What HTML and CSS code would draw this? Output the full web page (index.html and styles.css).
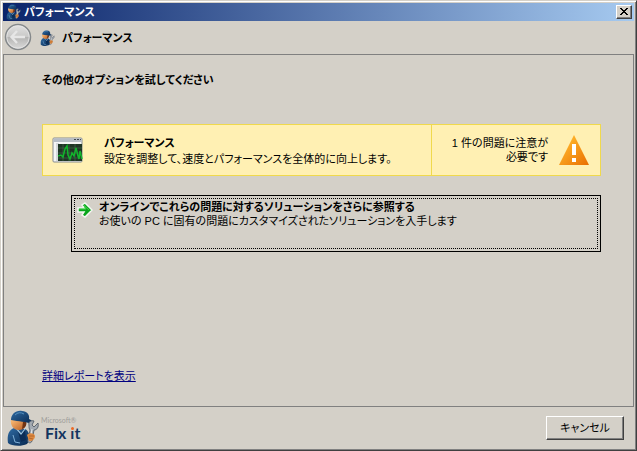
FILE: index.html
```html
<!DOCTYPE html>
<html lang="ja">
  <head>
    <meta charset="utf-8" />
    <title>パフォーマンス</title>
    <link rel="stylesheet" href="styles.css">
  </head>
  <body>
    <svg class="defs" aria-hidden="true">
      <defs>
        <linearGradient id="cap" x1="0" y1="0" x2="1" y2="1">
          <stop offset="0" stop-color="#2f6ba3" />
          <stop offset="1" stop-color="#06254c" />
        </linearGradient>
        <linearGradient id="face" x1="0" y1="0" x2="1" y2="1">
          <stop offset="0" stop-color="#ffc27c" />
          <stop offset="1" stop-color="#b85b20" />
        </linearGradient>
        <symbol id="mechanic" viewBox="0 0 32 36">
          <path d="M1 33C0 27 1 20 7 18L18 19C22 21 22 25 24 28L20 34C14 37 4 36 1 33Z" fill="url(#cap)" />
          <path d="M10 18L14 23L18 19L19 30L14 32Z" fill="#0b2c56" />
          <path d="M9 18L14 24L18 19" fill="none" stroke="#9cc5e2" stroke-width="1.2" />
          <path d="M6 25L8 32L13 33" fill="none" stroke="#7fb0d8" />
          <path d="M4 9C3 15 6 20 12 20C17 20 20 16 19 9Z" fill="url(#face)" />
          <path d="M15 19C19 18 20 14 19 11L16 12Z" fill="#713414" />
          <path d="M4 10C4 4 9 0 15 1C20 1 23 5 22 9C26 11 27 13 24 14C19 11 12 12 4 10Z" fill="url(#cap)" />
          <path d="M8 5Q12 1 17 4" fill="none" stroke="#5590c0" />
          <path d="M22 15C21 12 24 10 27 11L25 15L27 17L31 13C32 17 30 20 27 20L25 31C24 34 20 33 21 30L23 20C22 19 22 17 22 15Z" fill="#a3aab2" stroke="#555e69" stroke-width=".9" />
          <path d="M25 19L23 31" stroke="#e4e8eb" />
          <path d="M20 25C22 22 28 23 28 26C28 29 25 32 22 31Z" fill="#dc8a42" />
          <path d="M22 26L27 26M22 28L26 29" stroke="#a9571f" stroke-width=".7" />
        </symbol>
      </defs>
    </svg>
    <div class="window">
      <div class="titlebar">
        <svg class="title-icon" aria-hidden="true"><use href="#mechanic" /></svg>
        <span class="title">パフォーマンス</span>
        <button class="close" type="button" aria-label="閉じる">
          <svg width="10" height="8" viewBox="0 0 10 8" shape-rendering="crispEdges">
            <path d="M1 0h2v1h1v1h2V1h1V0h2v1H8v1H7v1H6v1h1v1h1v1h1v1H7V6H6V5H4v1H3v1H1V6h1V5h1V4h1V3H3V2H2V1H1z" />
          </svg>
        </button>
      </div>
      <header class="header">
        <button class="back" type="button" aria-label="戻る" disabled>
          <svg width="28" height="28" viewBox="0 0 28 28">
            <defs>
              <linearGradient id="disc" x1="0" y1="0" x2="0" y2="1">
                <stop offset="0" stop-color="#e2e2e2" />
                <stop offset=".48" stop-color="#c9c9c8" />
                <stop offset=".52" stop-color="#b4b4b3" />
                <stop offset="1" stop-color="#dddddc" />
              </linearGradient>
            </defs>
            <circle cx="14" cy="14" r="12.5" fill="url(#disc)" stroke="#85898b" stroke-width="1.5" />
            <circle cx="14" cy="14" r="11.2" fill="none" stroke="#e6e6e6" stroke-width=".8" />
            <path d="M13 8L7.5 14L13 20M8 14H21" fill="none" stroke="#e6e6e6" stroke-width="2.4" />
          </svg>
        </button>
        <svg class="header-icon" aria-hidden="true"><use href="#mechanic" /></svg>
        <span class="header-title">パフォーマンス</span>
      </header>
      <main class="content">
        <h1 class="heading">その他のオプションを試してください</h1>
        <section class="issue">
          <svg class="issue-icon" width="32" height="28" viewBox="0 0 32 28" aria-hidden="true">
            <rect x="1" y="2" width="29" height="24" rx="1" fill="#f5f6f6" stroke="#858b91" />
            <path d="M1.5 2.5H29.5V6H1.5Z" fill="#b6bdc5" />
            <path d="M22 3.5h2M25 3.5h2M28 3.5h1" stroke="#414950" />
            <rect x="4" y="7" width="3" height="18" fill="#d5d9dc" />
            <rect x="6" y="8" width="24" height="17" fill="#1f3525" />
            <path d="M6 12h24M6 17h24M6 22h24M11 8v17M17 8v17M23 8v17" stroke="#46704d" stroke-width=".6" />
            <path d="M6 20l3-1l2 2l2-8l2-3l1 9l2 4l2-6l2 3l2-8l2 8l1 3l1-8l2 8" fill="none" stroke="#12b52c" stroke-width="1.5" />
          </svg>
          <div class="issue-text">
            <h2 class="issue-title">パフォーマンス</h2>
            <p class="line">設定を調整して、速度とパフォーマンスを全体的に向上します。</p>
          </div>
          <div class="issue-status">
            <p class="line">1 件の問題に注意が<br>必要です</p>
            <svg width="32" height="32" viewBox="0 0 32 32" aria-hidden="true">
              <defs>
                <linearGradient id="warn" x1="0" y1="0" x2="1" y2="1">
                  <stop offset=".2" stop-color="#ffb52b" />
                  <stop offset="1" stop-color="#e96e00" />
                </linearGradient>
              </defs>
              <path d="M16 1L31 31H1Z" fill="url(#warn)" />
              <path d="M14 10h4v11h-4zM14 24h4v4h-4z" fill="#fff" />
            </svg>
          </div>
        </section>
        <button class="option" type="button">
          <svg width="16" height="16" viewBox="0 0 16 16" aria-hidden="true">
            <path d="M1 6H7L5 3L8 1L15 8L8 15L5 13L7 10H1Z" fill="#0aa51c" stroke="#f4f7f2" stroke-width="1.5" />
            <path d="M2 7H9L7 3.5L12 8" fill="none" stroke="#3fd046" />
          </svg>
          <span class="option-text">
            <strong>オンラインでこれらの問題に対するソリューションをさらに参照する</strong>
            <span>お使いの PC に固有の問題にカスタマイズされたソリューションを入手します</span>
          </span>
        </button>
        <a class="report" href="#report">詳細レポートを表示</a>
      </main>
      <footer class="footer">
        <div class="brand">
          <svg class="brand-icon" aria-hidden="true"><use href="#mechanic" /></svg>
          <div class="brand-text">
            <span class="brand-maker">Microsoft®</span>
            <span class="brand-name">Fix <span class="brand-i">ı</span>t</span>
          </div>
        </div>
        <button class="cancel" type="button">キャンセル</button>
      </footer>
    </div>
  </body>
</html>
```
FILE: styles.css
```css
* {
  box-sizing: border-box;
}
body {
  margin: 0;
  background-color: #d4d0c8;
  color: #000;
  font-family: "Liberation Sans", "Noto Sans CJK JP", sans-serif;
  font-size: 11px;
  line-height: 14px;
  font-feature-settings: "palt";
}
button {
  font: inherit;
  font-feature-settings: inherit;
  color: inherit;
  padding: 0;
  background-color: #d4d0c8;
}
svg {
  display: block;
  flex: none;
}
h1,
h2,
p {
  margin: 0;
  font-size: 11px;
}
.defs {
  position: absolute;
  width: 0;
  height: 0;
}
.window {
  display: flex;
  flex-direction: column;
  min-height: 100vh;
  padding: 1px;
  border: 1px solid;
  border-color: #d4d0c8 #404040 #404040 #d4d0c8;
  box-shadow: inset 1px 1px #fff, inset -1px -1px #808080;
}
.titlebar {
  display: flex;
  align-items: center;
  gap: 3px;
  height: 18px;
  margin: 1px 1px 0;
  padding: 0 2px 0 3px;
  background: linear-gradient(to right, #0a246a, #a6caf0);
  color: #fff;
  font-weight: bold;
}
.title-icon,
.header-icon {
  width: 15px;
  height: 16px;
}
.title {
  flex: 1;
}
.close {
  display: flex;
  align-items: center;
  justify-content: center;
  width: 16px;
  height: 14px;
}
.close,
.cancel {
  border: 1px solid;
  border-color: #fff #404040 #404040 #fff;
  box-shadow: inset -1px -1px #808080;
}
.header {
  display: flex;
  align-items: center;
  height: 33px;
  padding-left: 2px;
}
.back {
  margin-bottom: 2px;
  border: none;
  background: none;
}
.header-icon {
  margin: 0 7px 0 8px;
}
.header-title {
  font-weight: bold;
}
.content {
  display: flex;
  flex-direction: column;
  flex: 1;
  margin: 0 1px;
  padding: 18px 32px 23px 38px;
  border: 1px solid #808080;
}
.heading {
  margin-bottom: 37px;
}
.issue {
  display: flex;
  align-items: center;
  min-height: 52px;
  border: 1px solid #f0d94c;
  background-color: #fff0b3;
}
.issue-icon {
  margin: 0 20px 0 9px;
}
.issue-text {
  flex: 1;
}
.issue-title {
  line-height: 18px;
}
.issue-status {
  display: flex;
  align-items: center;
  align-self: stretch;
  justify-content: flex-end;
  gap: 10px;
  width: 169px;
  padding-right: 10px;
  border-left: 1px solid #f0d94c;
  text-align: right;
}
.option {
  display: flex;
  align-items: flex-start;
  gap: 6px;
  min-height: 57px;
  margin: 19px 0 0 29px;
  padding: 4px 5px;
  border: 1px solid #000;
  outline: 1px dotted #000;
  outline-offset: -4px;
  text-align: left;
}
.option svg {
  margin-top: 2px;
}
.option-text {
  display: flex;
  flex-direction: column;
}
.report {
  align-self: flex-start;
  margin-top: auto;
  color: #000080;
}
.footer {
  display: flex;
  align-items: center;
  justify-content: space-between;
  height: 42px;
  padding: 0 11px 0 5px;
}
.brand {
  display: flex;
  align-items: center;
  gap: 2px;
}
.brand-icon {
  width: 32px;
  height: 36px;
}
.brand-text {
  display: flex;
  flex-direction: column;
  font-family: Lato, sans-serif;
}
.brand-maker {
  color: #a09e9b;
  font-size: 7px;
  line-height: 10px;
}
.brand-name {
  padding-left: 4px;
  color: #14355f;
  font-size: 16px;
  font-weight: bold;
  line-height: 16px;
}
/* dotless i with its own orange dot */
.brand-i {
  position: relative;
}
.brand-i::before {
  content: "";
  position: absolute;
  top: 4px;
  left: 1px;
  width: 3px;
  height: 3px;
  border-radius: 50%;
  background-color: #ee6a24;
}
.cancel {
  width: 78px;
  height: 24px;
}
```
